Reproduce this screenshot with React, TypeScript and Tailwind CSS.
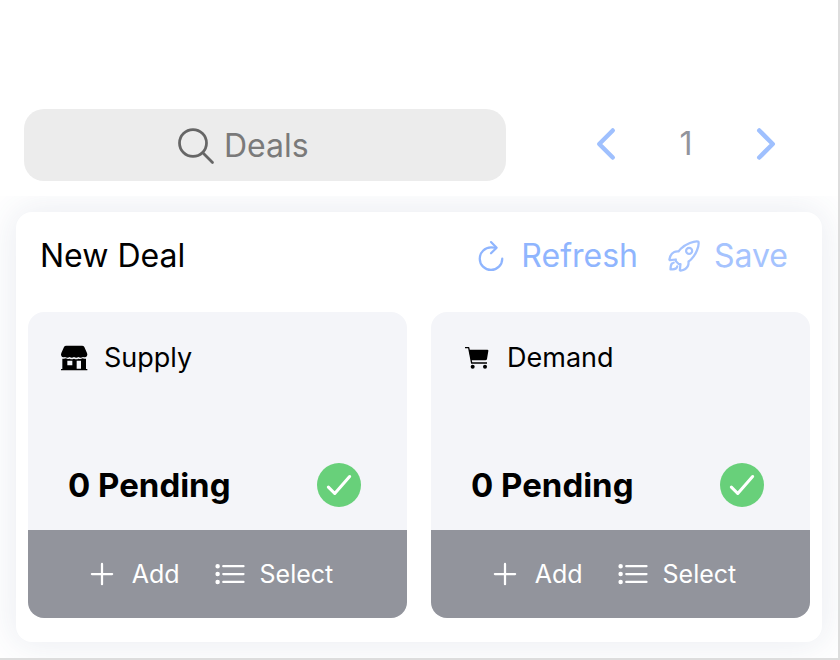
import type { ReactNode } from 'react';
import {
  IoAddOutline,
  IoCheckmarkOutline,
  IoChevronBack,
  IoChevronForward,
  IoListOutline,
  IoRefreshOutline,
  IoRocketOutline,
  IoSearchOutline,
} from 'react-icons/io5';

function StoreIcon() {
  return (
    <svg viewBox="0 0 84 84" className="size-7 shrink-0" fill="currentColor" aria-hidden="true">
      <path d="M19 5H66Q71 5 73 9L81 27Q83 32 81 36Q77 42 69 39Q62 44 55 39Q49 44 42 39Q35 44 29 39Q22 44 15 39Q7 42 4 36Q2 32 4 27L12 9Q14 5 19 5Z" />
      <path
        fillRule="evenodd"
        d="M7 44Q14 45 18 43Q23 47 29 44Q35 47 42 44Q49 47 55 44Q62 47 67 43Q72 45 78 44V75H82V79H3V75H7ZM22 50V64H37V50ZM50 50V74H63V50Z"
      />
    </svg>
  );
}

function CartIcon() {
  return (
    <svg viewBox="0 0 84 84" className="size-7 shrink-0" fill="currentColor" aria-hidden="true">
      <path d="M18 17H73Q77 17 76 21L72 45Q71 49 67 49H24Z" />
      <path
        d="M6 11H17L26 57H72"
        fill="none"
        stroke="currentColor"
        strokeWidth="4"
        strokeLinejoin="round"
      />
      <circle cx="29" cy="68" r="6" />
      <circle cx="66" cy="68" r="6" />
    </svg>
  );
}

function Toolbar() {
  return (
    <header className="flex items-center pt-[109px] pb-[15px] pl-6 pr-12">
      <label className="flex h-[72px] grow items-center rounded-[20px] bg-[#ececec] pt-0.5 pl-[150px]">
        <IoSearchOutline className="size-11 shrink-0 text-[#666666]" />
        <input
          type="search"
          aria-label="Search deals"
          placeholder="Deals"
          className="ml-1.5 w-full min-w-0 bg-transparent text-[32px] leading-[44px] outline-none placeholder:text-[#7a7a7a]"
        />
      </label>
      <nav aria-label="Pages" className="ml-[76px] flex shrink-0 items-center gap-8 pb-0.5">
        <button type="button" aria-label="Previous page" className="text-[#9fc0fe]">
          <IoChevronBack className="size-12" />
        </button>
        <span className="w-12 text-center text-[32px] leading-[44px] text-[#92949c]">1</span>
        <button type="button" aria-label="Next page" className="text-[#9fc0fe]">
          <IoChevronForward className="size-12" />
        </button>
      </nav>
    </header>
  );
}

function DealSide({ title, icon }: { title: string; icon: ReactNode }) {
  return (
    <section className="flex min-w-0 flex-1 flex-col overflow-hidden rounded-2xl bg-[#f4f5f9]">
      <h2 className="flex items-center gap-4 px-8 pt-7 text-[27px] leading-9">
        {icon}
        {title}
      </h2>
      <div className="mt-[87px] flex items-center justify-between pr-[46px] pb-[23px] pl-10">
        <strong className="text-[33px] leading-[44px] font-bold">0 Pending</strong>
        <span className="flex size-11 items-center justify-center rounded-full bg-[#68d07a] text-white">
          <IoCheckmarkOutline className="size-[34px] [&_*]:stroke-[46px]" />
        </span>
      </div>
      <footer className="flex h-[88px] items-center justify-center gap-8 bg-[#92949c] pr-[18px] text-[25px] leading-9 text-white">
        <button type="button" className="flex items-center gap-3">
          <IoAddOutline className="size-9" />
          Add
        </button>
        <button type="button" className="flex items-center gap-3">
          <IoListOutline className="size-9" />
          Select
        </button>
      </footer>
    </section>
  );
}

export default function App() {
  return (
    <div className="border-r-2 border-b-2 border-[#dddddd] bg-white font-['Inter',sans-serif] text-black">
      <Toolbar />
      <main className="overflow-hidden p-4">
        <article className="rounded-2xl bg-white px-3 pb-6 shadow-[0_0_36px_4px_rgba(60,80,130,0.1)]">
          <div className="flex h-[100px] items-center pr-[22px] pb-3 pl-3 text-[32px] leading-[44px]">
            <h1 className="grow">New Deal</h1>
            <button type="button" className="flex items-center gap-3 text-[#8fb5fe]">
              <IoRefreshOutline className="size-9" />
              Refresh
            </button>
            <button type="button" className="ml-7 flex items-center gap-3 text-[#a5c3fe]">
              <IoRocketOutline className="size-9" />
              Save
            </button>
          </div>
          <div className="flex gap-6">
            <DealSide title="Supply" icon={<StoreIcon />} />
            <DealSide title="Demand" icon={<CartIcon />} />
          </div>
        </article>
      </main>
    </div>
  );
}
